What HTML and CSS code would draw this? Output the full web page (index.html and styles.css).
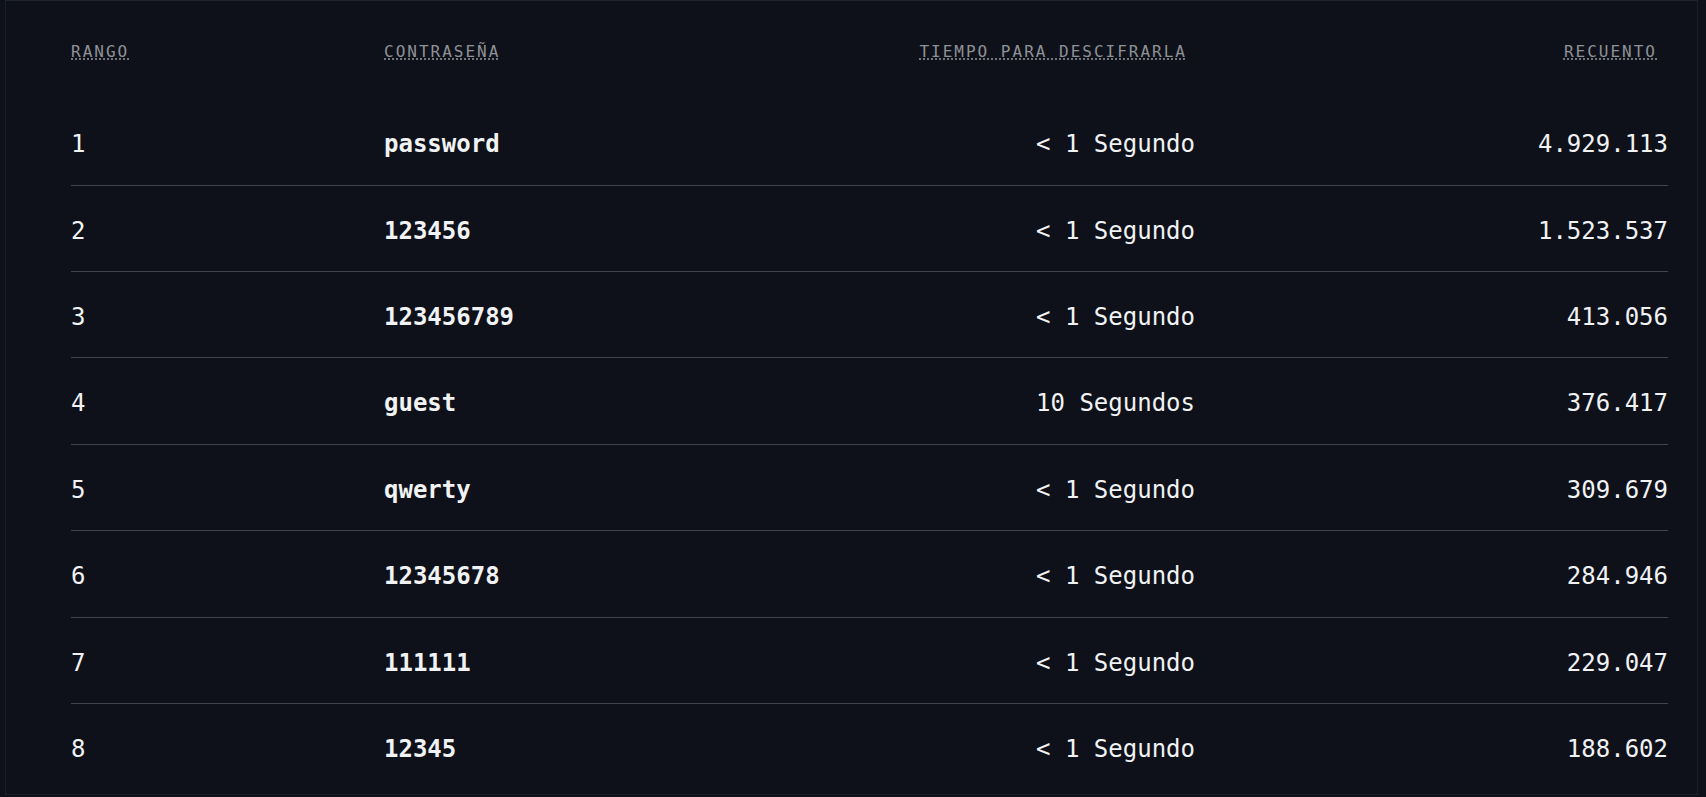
FILE: index.html
```html
<!DOCTYPE html>
<html lang="es">
  <head>
    <meta charset="utf-8" />
    <title>Contraseñas más comunes</title>
    <link rel="stylesheet" href="styles.css">
  </head>

  <body>
    <div class="frame">
      <table class="passwords">
        <colgroup>
          <col class="colRank" />
          <col class="colPass" />
          <col class="colTime" />
          <col class="colCount" />
        </colgroup>
        <thead>
          <tr>
            <th class="left"><abbr title="Rango">RANGO</abbr></th>
            <th class="left"><abbr title="Contraseña">CONTRASEÑA</abbr></th>
            <th class="right"><abbr title="Tiempo para descifrarla">TIEMPO PARA DESCIFRARLA</abbr></th>
            <th class="right last"><abbr title="Recuento">RECUENTO</abbr></th>
          </tr>
        </thead>
        <tbody>
          <tr>
            <td>1</td>
            <td class="pass">password</td>
            <td class="right">&lt; 1 Segundo</td>
            <td class="right">4.929.113</td>
          </tr>
          <tr>
            <td>2</td>
            <td class="pass">123456</td>
            <td class="right">&lt; 1 Segundo</td>
            <td class="right">1.523.537</td>
          </tr>
          <tr>
            <td>3</td>
            <td class="pass">123456789</td>
            <td class="right">&lt; 1 Segundo</td>
            <td class="right">413.056</td>
          </tr>
          <tr>
            <td>4</td>
            <td class="pass">guest</td>
            <td class="right">10 Segundos</td>
            <td class="right">376.417</td>
          </tr>
          <tr>
            <td>5</td>
            <td class="pass">qwerty</td>
            <td class="right">&lt; 1 Segundo</td>
            <td class="right">309.679</td>
          </tr>
          <tr>
            <td>6</td>
            <td class="pass">12345678</td>
            <td class="right">&lt; 1 Segundo</td>
            <td class="right">284.946</td>
          </tr>
          <tr>
            <td>7</td>
            <td class="pass">111111</td>
            <td class="right">&lt; 1 Segundo</td>
            <td class="right">229.047</td>
          </tr>
          <tr>
            <td>8</td>
            <td class="pass">12345</td>
            <td class="right">&lt; 1 Segundo</td>
            <td class="right">188.602</td>
          </tr>
        </tbody>
      </table>
    </div>
  </body>
</html>
```

FILE: styles.css
```css
html,
body {
  margin: 0;
  height: 100%;
  background-color: #0e1119;
}

.frame {
  box-sizing: border-box;
  height: 795px;
  margin: 0 8px 0 5px;
  padding: 0 29px 0 65px;
  border: 1px solid #1b1f29;
  border-top-color: #1f232d;
  overflow: hidden;
}

.passwords {
  width: 100%;
  margin-top: 40.5px;
  border-collapse: collapse;
  table-layout: fixed;
  font-family: "DejaVu Sans Mono", "Liberation Mono", monospace;
  color: #f1f2f4;
}

.colRank {
  width: 313px;
}
.colPass {
  width: 498px;
}
.colTime {
  width: 313px;
}

th {
  padding: 0 0 37.6px 0;
  font-size: 16px;
  line-height: 20px;
  font-weight: normal;
  letter-spacing: 2px;
  color: #8e9198;
}

th.right {
  padding-right: 8px;
}

th.last {
  padding-right: 11px;
}

abbr {
  text-decoration: underline dotted;
  text-underline-offset: 2px;
}

td {
  padding: 28px 0 22px 0;
  font-size: 24px;
  line-height: 35.4px;
  white-space: nowrap;
}

tbody tr {
  border-bottom: 1px solid #40444f;
}

tbody tr:last-child {
  border-bottom: none;
}

.left {
  text-align: left;
}
.right {
  text-align: right;
}

.pass {
  font-weight: bold;
}
```
